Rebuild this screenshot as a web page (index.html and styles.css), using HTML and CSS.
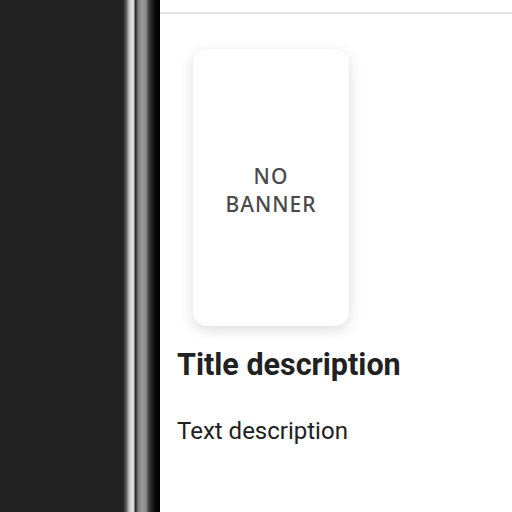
FILE: index.html
```html
<!DOCTYPE html>
<html lang="en">
<head>
  <meta charset="UTF-8" />
  <title>Banner preview</title>
  <link rel="stylesheet" href="styles.css">
</head>
<body>

<div class="frame">
  <div class="backdrop"></div>
  <div class="bezel"></div>

  <main class="screen">
    <div class="topbar"></div>

    <div class="content">
      <div class="banner">
        <span>NO<br>BANNER</span>
      </div>
      <h2 class="title">Title description</h2>
      <p class="text">Text description</p>
    </div>
  </main>
</div>

</body>
</html>
```

FILE: styles.css
```css
body {
  margin: 0;
  font-family: 'Roboto', sans-serif;
  background: #fff;
  color: #212121;
}
.frame {
  display: flex;
  height: 512px;
  overflow: hidden;
}
.backdrop {
  width: 123px;
  background: #222;
}
.bezel {
  width: 37px;
  background: linear-gradient(to right,
    #222 0px,
    #555 3px,
    #bbb 6px,
    #e6e6e6 9px,
    #d0d0d0 11px,
    #2a2a2a 12px,
    #333 13px,
    #7a7a7a 15px,
    #9a9a9a 19px,
    #8a8a8a 23px,
    #3a3a3a 26px,
    #222 29px,
    #0a0a0a 32px,
    #000 37px);
}
.screen {
  flex: 1;
  background: #fff;
}
.topbar {
  height: 12px;
  border-bottom: 2px solid #e2e2e2;
}
.content {
  padding: 35px 0 0 17px;
}
.banner {
  width: 156px;
  height: 277px;
  margin-left: 16px;
  border-radius: 14px;
  background: #fff;
  box-shadow: 0 4px 14px rgba(0, 0, 0, 0.14);
  display: flex;
  align-items: center;
  justify-content: center;
  text-align: center;
}
.banner span {
  font-family: 'Noto Sans', sans-serif;
  font-size: 21px;
  font-weight: 500;
  line-height: 28px;
  letter-spacing: 1px;
  color: #4a4a4a;
  margin-top: 4px;
}
.title {
  margin: 21px 0 0;
  font-size: 30.5px;
  line-height: 36px;
  font-weight: 700;
}
.text {
  margin: 34px 0 0;
  font-size: 24px;
  line-height: 28px;
}
```
